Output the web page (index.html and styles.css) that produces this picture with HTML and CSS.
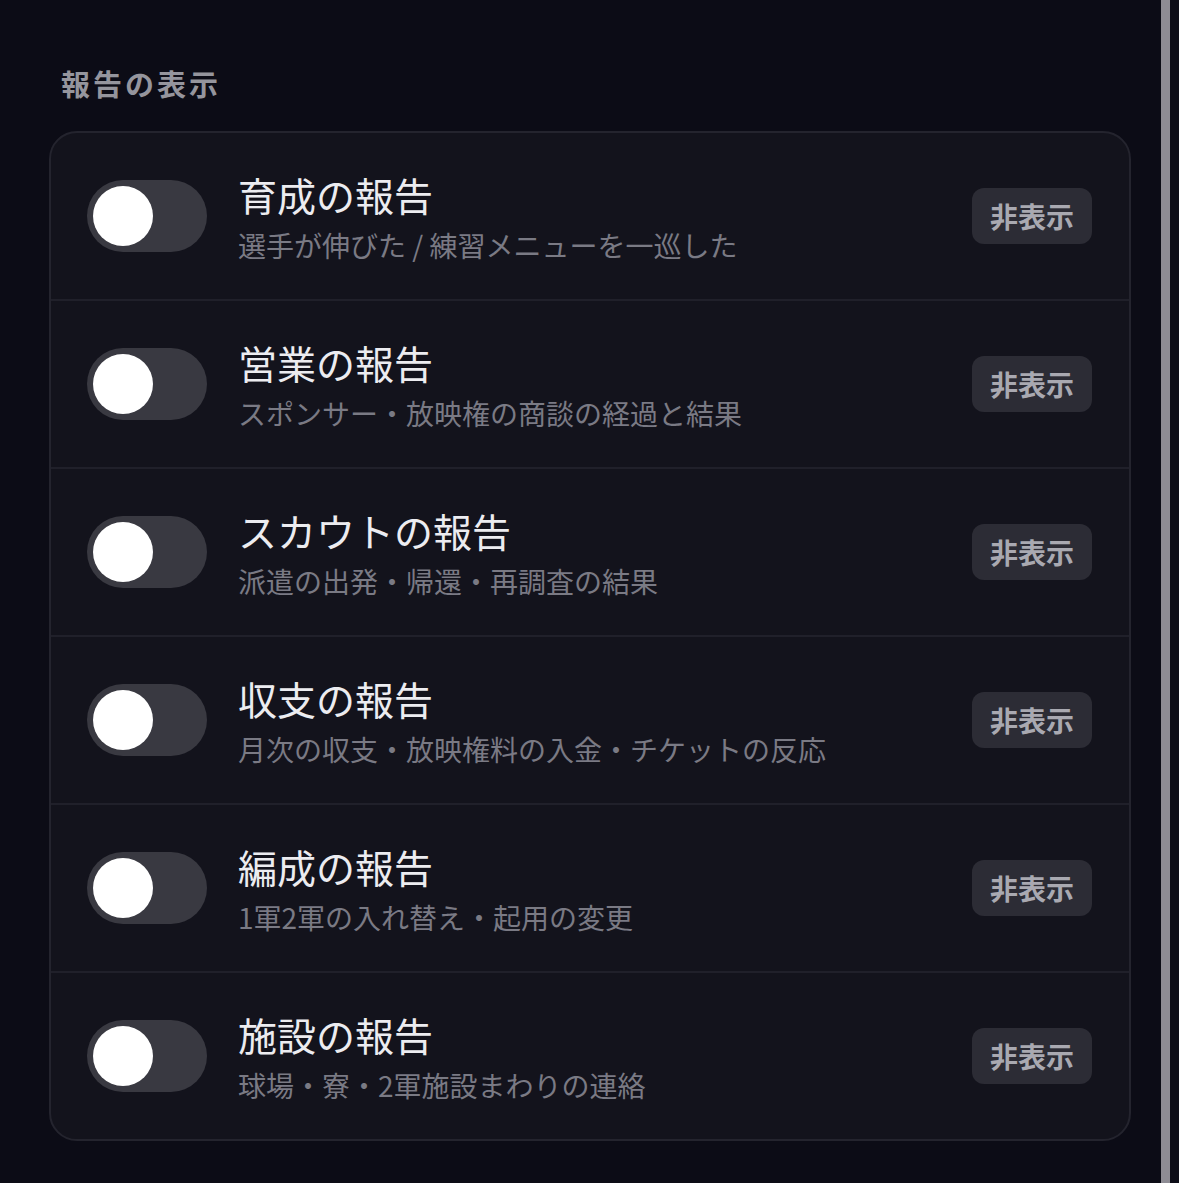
FILE: index.html
```html
<!DOCTYPE html>
<html lang="ja">
<head>
<meta charset="utf-8">
<title>報告の表示</title>
<link rel="stylesheet" href="styles.css">
</head>
<body>
<div class="page">
  <main class="main">
    <h2 class="section-title">報告の表示</h2>
    <div class="card">
      <div class="row">
        <div class="toggle"><span class="knob"></span></div>
        <div class="text">
          <div class="title">育成の報告</div>
          <div class="sub">選手が伸びた / 練習メニューを一巡した</div>
        </div>
        <span class="badge">非表示</span>
      </div>
      <div class="row">
        <div class="toggle"><span class="knob"></span></div>
        <div class="text">
          <div class="title">営業の報告</div>
          <div class="sub">スポンサー・放映権の商談の経過と結果</div>
        </div>
        <span class="badge">非表示</span>
      </div>
      <div class="row">
        <div class="toggle"><span class="knob"></span></div>
        <div class="text">
          <div class="title">スカウトの報告</div>
          <div class="sub">派遣の出発・帰還・再調査の結果</div>
        </div>
        <span class="badge">非表示</span>
      </div>
      <div class="row">
        <div class="toggle"><span class="knob"></span></div>
        <div class="text">
          <div class="title">収支の報告</div>
          <div class="sub">月次の収支・放映権料の入金・チケットの反応</div>
        </div>
        <span class="badge">非表示</span>
      </div>
      <div class="row">
        <div class="toggle"><span class="knob"></span></div>
        <div class="text">
          <div class="title">編成の報告</div>
          <div class="sub">1軍2軍の入れ替え・起用の変更</div>
        </div>
        <span class="badge">非表示</span>
      </div>
      <div class="row">
        <div class="toggle"><span class="knob"></span></div>
        <div class="text">
          <div class="title">施設の報告</div>
          <div class="sub">球場・寮・2軍施設まわりの連絡</div>
        </div>
        <span class="badge">非表示</span>
      </div>
    </div>
  </main>
  <div class="scrollbar"></div>
  <div class="gutter"></div>
</div>
</body>
</html>
```
FILE: styles.css
```css
html, body {
  margin: 0;
  padding: 0;
  background: #0c0c16;
  height: 100%;
  overflow: hidden;
}
body {
  font-family: "Noto Sans CJK JP", "Noto Sans", sans-serif;
  color: #ececf0;
}
.page {
  display: flex;
  height: 1183px;
}
.main {
  flex: 1;
  padding: 65px 30px 0 49px;
  min-width: 0;
}
.section-title {
  margin: 0 0 30px 12px;
  font-size: 29px;
  line-height: 36px;
  font-weight: 700;
  letter-spacing: 3px;
  color: #95959d;
}
.card {
  background: #13131c;
  border: 2px solid #24242e;
  border-radius: 28px;
  overflow: hidden;
}
.row {
  display: flex;
  align-items: center;
  height: 166px;
  padding: 0 37px 0 36px;
}
.row + .row {
  border-top: 2px solid #20202a;
}
.toggle {
  flex: none;
  width: 120px;
  height: 72px;
  border-radius: 36px;
  background: #393941;
  padding: 6px;
  box-sizing: border-box;
  display: flex;
  align-items: center;
}
.knob {
  width: 60px;
  height: 60px;
  border-radius: 50%;
  background: #ffffff;
}
.text {
  margin-left: 31px;
  flex: 1;
  min-width: 0;
}
.title {
  font-size: 39px;
  line-height: 49px;
  color: #ececf0;
}
.sub {
  margin-top: 8px;
  font-size: 28px;
  line-height: 36px;
  color: #7a7a84;
}
.badge {
  flex: none;
  background: #2c2c35;
  color: #a9a9b1;
  font-size: 28px;
  font-weight: 700;
  line-height: 56px;
  height: 56px;
  padding: 0 18px;
  border-radius: 12px;
}
.scrollbar {
  flex: none;
  width: 9px;
  background: #8e8c94;
}
.gutter {
  flex: none;
  width: 9px;
  background: #0d0d17;
}
```
